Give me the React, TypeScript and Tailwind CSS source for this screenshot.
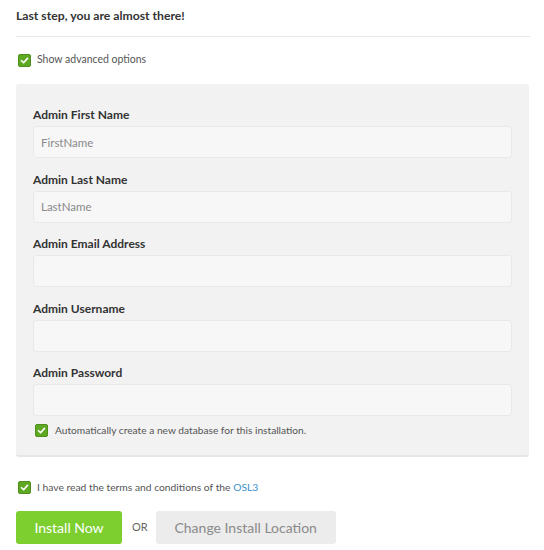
const font = { fontFamily: "Lato, 'Open Sans', sans-serif" };

const Check = ({ className = "" }: { className?: string }) => (
  <span
    className={`flex h-[13px] w-[13px] shrink-0 items-center justify-center rounded-[2px] border border-[#4f8f1b] bg-[#5fa823] ${className}`}
  >
    <svg viewBox="0 0 12 12" className="h-[9px] w-[9px]">
      <path d="M2 6.3 4.8 9 10 3.2" fill="none" stroke="#fff" strokeWidth="2.2" strokeLinecap="round" strokeLinejoin="round" />
    </svg>
  </span>
);

interface FieldProps {
  label: string;
  placeholder?: string;
}

const Field = ({ label, placeholder }: FieldProps) => (
  <div className="flex flex-col">
    <label className="text-[12px] font-bold leading-[16px] text-[#333]">{label}</label>
    <input
      placeholder={placeholder}
      className="mt-[3px] h-[32px] w-full rounded-[3px] border border-[#e9e9e9] bg-[#f7f7f7] px-[7px] text-[11.5px] text-[#555] outline-none placeholder:text-[#8a8a8a]"
    />
  </div>
);

export default function App() {
  return (
    <div className="min-h-[550px] w-[544px] bg-white px-[16px] pt-[8px] text-[#333]" style={font}>
      <h1 className="text-[12.2px] font-bold leading-[16px] text-[#333]">Last step, you are almost there!</h1>
      <div className="mt-[12px] h-px w-[514px] bg-[#e8e8e8]" />

      <div className="mt-[15px] flex h-[16px] items-center gap-[6px] pl-[2px]">
        <Check />
        <span className="text-[10.5px] text-[#555]">Show advanced options</span>
      </div>

      <div className="mt-[16px] w-[513px] rounded-[3px] border-b-2 border-[#e6e6e6] bg-[#f2f2f2] px-[17px] pb-[17px] pt-[23px]">
        <div className="flex flex-col gap-[13.5px]">
          <Field label="Admin First Name" placeholder="FirstName" />
          <Field label="Admin Last Name" placeholder="LastName" />
          <Field label="Admin Email Address" />
          <Field label="Admin Username" />
          <Field label="Admin Password" />
        </div>
        <div className="mt-[7px] flex h-[15px] items-center gap-[7px] pl-[2px]">
          <Check />
          <span className="text-[10.2px] text-[#555]">Automatically create a new database for this installation.</span>
        </div>
      </div>

      <div className="mt-[23px] flex h-[15px] items-center gap-[6px] pl-[2px]">
        <Check />
        <span className="text-[10.3px] text-[#555]">
          I have read the terms and conditions of the <span className="text-[#3b8fc9]">OSL3</span>
        </span>
      </div>

      <div className="mt-[16px] flex items-center">
        <button className="h-[33px] w-[106px] rounded-[3px] bg-[#7dcf30] text-[14px] text-white">Install Now</button>
        <span className="ml-[10px] text-[11px] text-[#666]">OR</span>
        <button className="ml-[8px] h-[33px] w-[180px] rounded-[3px] bg-[#ececec] text-[14px] text-[#8a8a8a]">
          Change Install Location
        </button>
      </div>
    </div>
  );
}
